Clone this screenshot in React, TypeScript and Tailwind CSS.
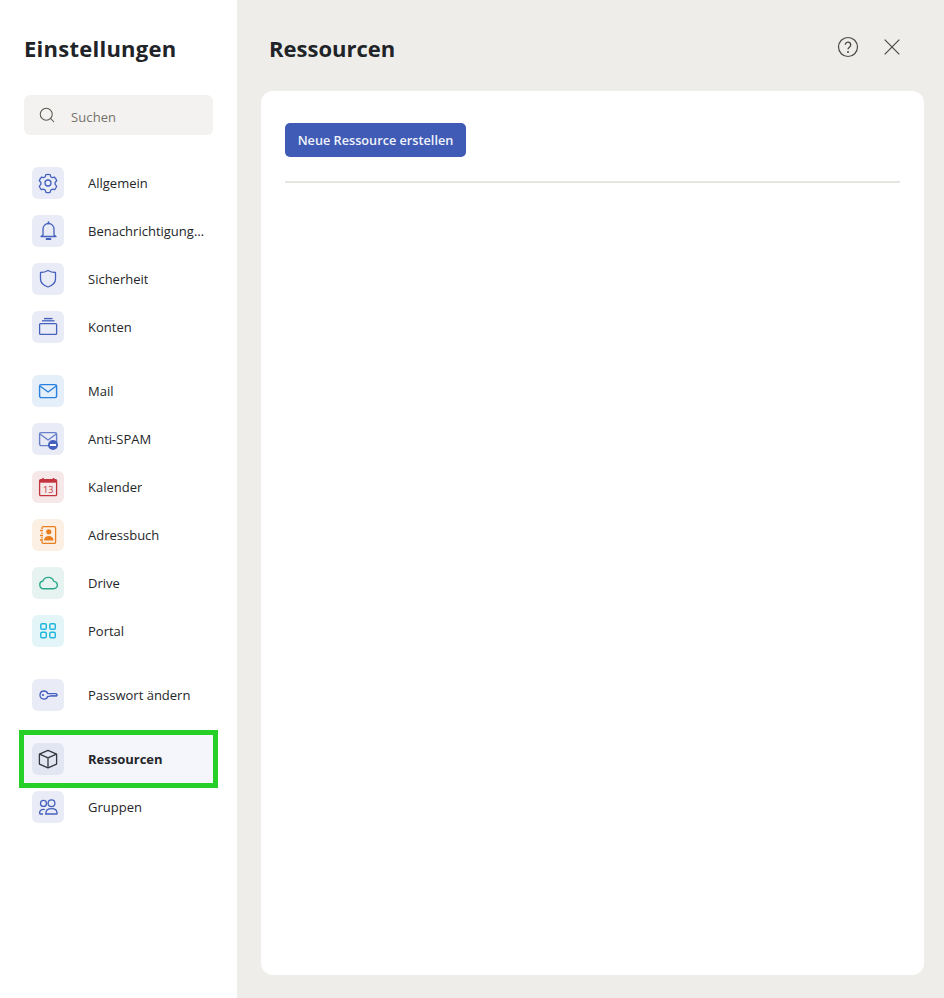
import { Search } from "lucide-react";
import type { ReactNode } from "react";

const blue = "#4560bd";

function GearIcon() {
  return (
    <svg viewBox="0 0 32 32" className="w-8 h-8" fill="none" stroke={blue} strokeWidth="1.3">
      <circle cx="16" cy="16" r="3" />
      <path
        strokeLinejoin="round"
        d="M13.9 7.600a8.800 8.800 0 0 1 4.200 0l.7 2.200 1.600.9 2.200-.5a8.800 8.800 0 0 1 2.100 3.600l-1.600 1.700v1.900l1.600 1.700a8.800 8.800 0 0 1-2.100 3.600l-2.200-.5-1.600.9-.7 2.200a8.800 8.800 0 0 1-4.200 0l-.7-2.200-1.600-.9-2.200.5a8.800 8.800 0 0 1-2.100-3.600l1.600-1.700v-1.900l-1.600-1.700a8.800 8.800 0 0 1 2.100-3.600l2.200.5 1.600-.9z"
      />
    </svg>
  );
}

function BellIcon() {
  return (
    <svg viewBox="0 0 32 32" className="w-8 h-8" fill="none" stroke={blue} strokeWidth="1.3" strokeLinejoin="round">
      <path d="M11 20v-6a5.500 5.500 0 0 1 11 0v6l2 1.500H9z" />
      <path d="M16.500 8.500V7" strokeWidth="1.6" strokeLinecap="round" />
      <path d="M14.500 24h4" strokeWidth="1.8" strokeLinecap="round" />
    </svg>
  );
}

function ShieldIcon() {
  return (
    <svg viewBox="0 0 32 32" className="w-8 h-8" fill="none" stroke={blue} strokeWidth="1.3" strokeLinejoin="round">
      <path d="M16 7.500c2.300 1.400 4.800 2 7.500 2V16c0 3.800-2.600 6.400-7.500 8-4.900-1.600-7.500-4.200-7.500-8V9.500c2.700 0 5.200-.6 7.500-2z" />
    </svg>
  );
}

function AccountsIcon() {
  return (
    <svg viewBox="0 0 32 32" className="w-8 h-8" fill="none" stroke={blue} strokeWidth="1.3">
      <rect x="7.600" y="12.600" width="17" height="10.800" rx="1" />
      <path d="M10 9.800h12.500" />
      <path d="M12 7.600h8.500" strokeWidth="1.4" />
    </svg>
  );
}

function MailIcon({ color }: { color: string }) {
  return (
    <svg viewBox="0 0 32 32" className="w-8 h-8" fill="none" stroke={color} strokeWidth="1.4" strokeLinejoin="round">
      <rect x="7.600" y="9.600" width="17" height="13" rx="1.500" />
      <path d="M8 11l8.100 6 8.100-6" />
    </svg>
  );
}

function SpamIcon() {
  return (
    <div className="relative w-8 h-8">
      <MailIcon color="#6a80c8" />
      <div className="absolute left-[15.5px] top-[16.5px] w-[10px] h-[10px] rounded-full bg-[#4560bd] flex items-center justify-center">
        <div className="w-[6px] h-[2px] bg-white" />
      </div>
    </div>
  );
}

function CalendarIcon() {
  return (
    <svg viewBox="0 0 32 32" className="w-8 h-8" fill="none" stroke="#c4343f" strokeWidth="1.3">
      <rect x="7.600" y="8.600" width="17" height="16" rx="1.200" />
      <path d="M8 10.200h16.500" strokeWidth="3" />
      <path d="M11 7v2M21.500 7v2" strokeWidth="1.6" />
      <text x="16.200" y="22" textAnchor="middle" fontSize="9" fill="#c4343f" stroke="none" fontFamily="Open Sans, sans-serif">
        13
      </text>
    </svg>
  );
}

function AddressIcon() {
  return (
    <svg viewBox="0 0 32 32" className="w-8 h-8" fill="none" stroke="#e97f1f" strokeWidth="1.3">
      <path d="M10 10V8.900a1.300 1.300 0 0 1 1.300-1.300h11a1.300 1.300 0 0 1 1.300 1.300v14.200a1.300 1.300 0 0 1-1.300 1.300h-11a1.300 1.300 0 0 1-1.300-1.300V22" />
      <path d="M10 13.500v1.500M10 18v1.500" />
      <path d="M8 11.500h3M8 16.500h3M8 21h3" strokeWidth="1.4" />
      <circle cx="16.800" cy="12.800" r="2.600" fill="#e97f1f" stroke="none" />
      <path d="M12 21.500c0-3 2-4.500 4.800-4.500s4.800 1.500 4.800 4.500z" fill="#e97f1f" stroke="none" />
    </svg>
  );
}

function CloudIcon() {
  return (
    <svg viewBox="0 0 32 32" className="w-8 h-8" fill="none" stroke="#2ba88c" strokeWidth="1.4" strokeLinejoin="round">
      <path d="M12 21.800h9.500a3.700 3.700 0 0 0 .3-7.400 5.800 5.800 0 0 0-10.900-.4A3.950 3.950 0 0 0 12 21.800z" />
    </svg>
  );
}

function GridIcon() {
  return (
    <svg viewBox="0 0 32 32" className="w-8 h-8" fill="none" stroke="#22b8dc" strokeWidth="1.5">
      <rect x="8.800" y="8.700" width="5.500" height="5.500" rx="1.300" />
      <rect x="17.800" y="8.700" width="5.500" height="5.500" rx="1.300" />
      <rect x="8.800" y="17.200" width="5.500" height="5.500" rx="1.300" />
      <rect x="17.800" y="17.200" width="5.500" height="5.500" rx="1.300" />
    </svg>
  );
}

function KeyIcon() {
  return (
    <svg viewBox="0 0 32 32" className="w-8 h-8" fill="none" stroke={blue} strokeWidth="1.3" strokeLinejoin="round">
      <path d="M12 12a4 4 0 0 1 3.800 2.700h8.400l1 1.300-1.200 1.300-1-.7-1 .7-1-.7-1 .7-1-.7-1 .7h-2.200A4 4 0 1 1 12 12z" />
      <circle cx="11" cy="16" r="1.100" fill={blue} stroke="none" />
    </svg>
  );
}

function BoxIcon() {
  return (
    <svg viewBox="0 0 32 32" className="w-8 h-8" fill="none" stroke="#34383e" strokeWidth="1.3" strokeLinejoin="round">
      <path d="M16 7.400l8.600 3.700v10l-8.600 3.700-8.600-3.700v-10z" />
      <path d="M7.600 11.200l8.400 3.600 8.400-3.600M16 14.800v9.800" />
    </svg>
  );
}

function GroupIcon() {
  return (
    <svg viewBox="0 0 32 32" className="w-8 h-8" fill="none" stroke={blue} strokeWidth="1.3" strokeLinejoin="round">
      <circle cx="11.500" cy="12.400" r="3" />
      <circle cx="19.500" cy="12.200" r="3.400" />
      <path d="M13.500 23h11c.4 0 .6-.2.6-.6 0-3-2.200-4.800-5.600-4.800s-5.600 1.800-5.600 4.800c0 .4.200.6.600.6z" />
      <path d="M11 23H8.300c-.5 0-.7-.2-.7-.7 0-2.500 1.300-4 3.900-4 .5 0 1 0 1.400.2" />
    </svg>
  );
}

type Item = { label: string; icon: ReactNode; tint: string; active?: boolean };

const groups: Item[][] = [
  [
    { label: "Allgemein", icon: <GearIcon />, tint: "bg-[#e9ecf7]" },
    { label: "Benachrichtigungen", icon: <BellIcon />, tint: "bg-[#e9ecf7]" },
    { label: "Sicherheit", icon: <ShieldIcon />, tint: "bg-[#e9ecf7]" },
    { label: "Konten", icon: <AccountsIcon />, tint: "bg-[#e9ecf7]" },
  ],
  [
    { label: "Mail", icon: <MailIcon color="#2a80de" />, tint: "bg-[#e5eff9]" },
    { label: "Anti-SPAM", icon: <SpamIcon />, tint: "bg-[#e9ecf7]" },
    { label: "Kalender", icon: <CalendarIcon />, tint: "bg-[#f6e8e9]" },
    { label: "Adressbuch", icon: <AddressIcon />, tint: "bg-[#fcf0e5]" },
    { label: "Drive", icon: <CloudIcon />, tint: "bg-[#e6f3f0]" },
    { label: "Portal", icon: <GridIcon />, tint: "bg-[#e4f5f9]" },
  ],
  [{ label: "Passwort ändern", icon: <KeyIcon />, tint: "bg-[#e9ecf7]" }],
  [
    { label: "Ressourcen", icon: <BoxIcon />, tint: "bg-[#e2e6f3]", active: true },
    { label: "Gruppen", icon: <GroupIcon />, tint: "bg-[#e9ecf7]" },
  ],
];

function NavRow({ item }: { item: Item }) {
  return (
    <div
      className={`h-12 flex items-center gap-6 pl-2 pr-[7px] ${
        item.active ? "bg-[#f4f6fb] outline-[5px] outline-[#26d026]" : ""
      }`}
    >
      <div className={`w-8 h-8 shrink-0 rounded-md ${item.tint}`}>{item.icon}</div>
      <span
        className={`truncate pt-[2px] text-[13px] text-[#242629] ${item.active ? "font-bold" : ""}`}
      >
        {item.label}
      </span>
    </div>
  );
}

export default function App() {
  return (
    <div className="w-[944px] h-[998px] flex bg-[#eeedea] overflow-hidden font-['Open_Sans',sans-serif]">
      <aside className="w-[237px] shrink-0 bg-white px-6 pt-[30px]">
        <h1 className="text-[22px] leading-9 font-bold tracking-[0.25px] text-[#202327]">Einstellungen</h1>
        <div className="mt-[29px] h-10 rounded-md bg-[#f3f2f0] flex items-center pl-[14px] gap-[15px]">
          <Search className="w-[18px] h-[18px] text-[#5b5850]" strokeWidth={1.4} />
          <span className="pt-[5px] text-[13px] tracking-[0.1px] text-[#75726c]">Suchen</span>
        </div>
        <nav className="mt-6 flex flex-col gap-4">
          {groups.map((group, i) => (
            <div key={i} className="flex flex-col">
              {group.map((item) => (
                <NavRow key={item.label} item={item} />
              ))}
            </div>
          ))}
        </nav>
      </aside>

      <main className="flex-1 flex flex-col pl-6 pr-5 pb-[23px]">
        <header className="h-[91px] shrink-0 flex items-center justify-between pl-2 pt-[6px]">
          <h2 className="text-[22px] font-bold text-[#202327]">Ressourcen</h2>
          <div className="flex items-center gap-[25px] pr-[24px] mb-[3px]">
            <svg viewBox="0 0 22 22" className="w-[22px] h-[22px]" fill="none" stroke="#4a4843" strokeWidth="1.2">
              <circle cx="11" cy="11" r="9.500" />
              <path d="M8.300 8.800a2.700 2.700 0 1 1 4.300 2.200c-1 .7-1.600 1.200-1.600 2.300" strokeWidth="1.4" />
              <circle cx="11" cy="16" r="1" fill="#4a4843" stroke="none" />
            </svg>
            <svg viewBox="0 0 16 16" className="w-4 h-4" fill="none" stroke="#4a4843" strokeWidth="1.2">
              <path d="M.7.700l14.600 14.600M15.300.7L.7 15.300" />
            </svg>
          </div>
        </header>
        <section className="flex-1 bg-white rounded-xl px-6 pt-8">
          <button className="h-[34px] w-[181px] pt-[2px] rounded-[5px] bg-[#3f5bb5] text-[12.7px] font-semibold text-[#f2f4fb]">
            Neue Ressource erstellen
          </button>
          <div className="mt-6 h-[2px] bg-[#e6e5e0]" />
        </section>
      </main>
    </div>
  );
}
